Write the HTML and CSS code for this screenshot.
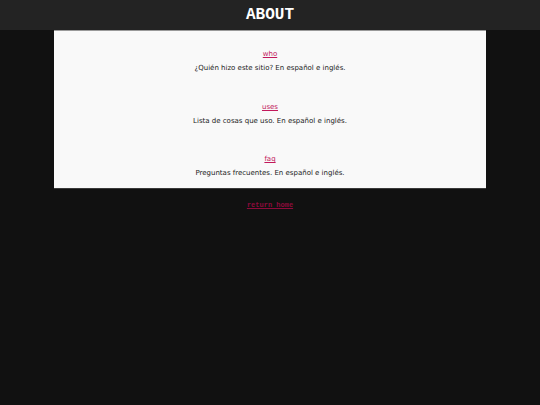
FILE: index.html
```html
<!DOCTYPE html>
<html lang="es">
<head>
<meta charset="utf-8">
<title>about</title>
<link rel="stylesheet" href="styles.css">
</head>
<body>
<header class="topbar">
  <h1 class="title">ABOUT</h1>
</header>
<main class="panel">
  <section class="entry">
    <a class="entry-link" href="#who">who</a>
    <p class="entry-desc">¿Quién hizo este sitio? En español e inglés.</p>
  </section>
  <section class="entry">
    <a class="entry-link" href="#uses">uses</a>
    <p class="entry-desc">Lista de cosas que uso. En español e inglés.</p>
  </section>
  <section class="entry">
    <a class="entry-link" href="#faq">faq</a>
    <p class="entry-desc">Preguntas frecuentes. En español e inglés.</p>
  </section>
</main>
<footer class="back">
  <a class="back-link" href="#home">return home</a>
</footer>
</body>
</html>
```
FILE: styles.css
```css
html, body {
  margin: 0;
  padding: 0;
  background: #111111;
}

body {
  font-family: "DejaVu Sans", Verdana, sans-serif;
  font-size: 7px;
  color: #222222;
}

.topbar {
  height: 30px;
  background: #232323;
  display: flex;
  align-items: center;
  justify-content: center;
}

.title {
  margin: 0;
  font-family: "Liberation Mono", "Courier New", monospace;
  font-weight: bold;
  font-size: 16px;
  color: #ffffff;
}

.panel {
  width: 432px;
  margin: 0 auto;
  background: #f9f9f9;
  border-top: 1px solid #9a9a9a;
  border-bottom: 1px solid #3a3a3a;
  padding: 18px 0 10px;
  display: flex;
  flex-direction: column;
  gap: 28.5px;
  text-align: center;
}

.entry {
  display: flex;
  flex-direction: column;
  align-items: center;
  gap: 4px;
}

.entry-link {
  color: #c2185b;
  text-decoration: underline;
  line-height: 10px;
}

.entry-desc {
  margin: 0;
  line-height: 10px;
  color: #222222;
}

.back {
  text-align: center;
  padding-top: 11px;
  line-height: 10px;
}

.back-link {
  font-family: "Liberation Mono", "Courier New", monospace;
  font-weight: bold;
  font-size: 7px;
  color: #8e0b3c;
  text-decoration: underline;
}
```
